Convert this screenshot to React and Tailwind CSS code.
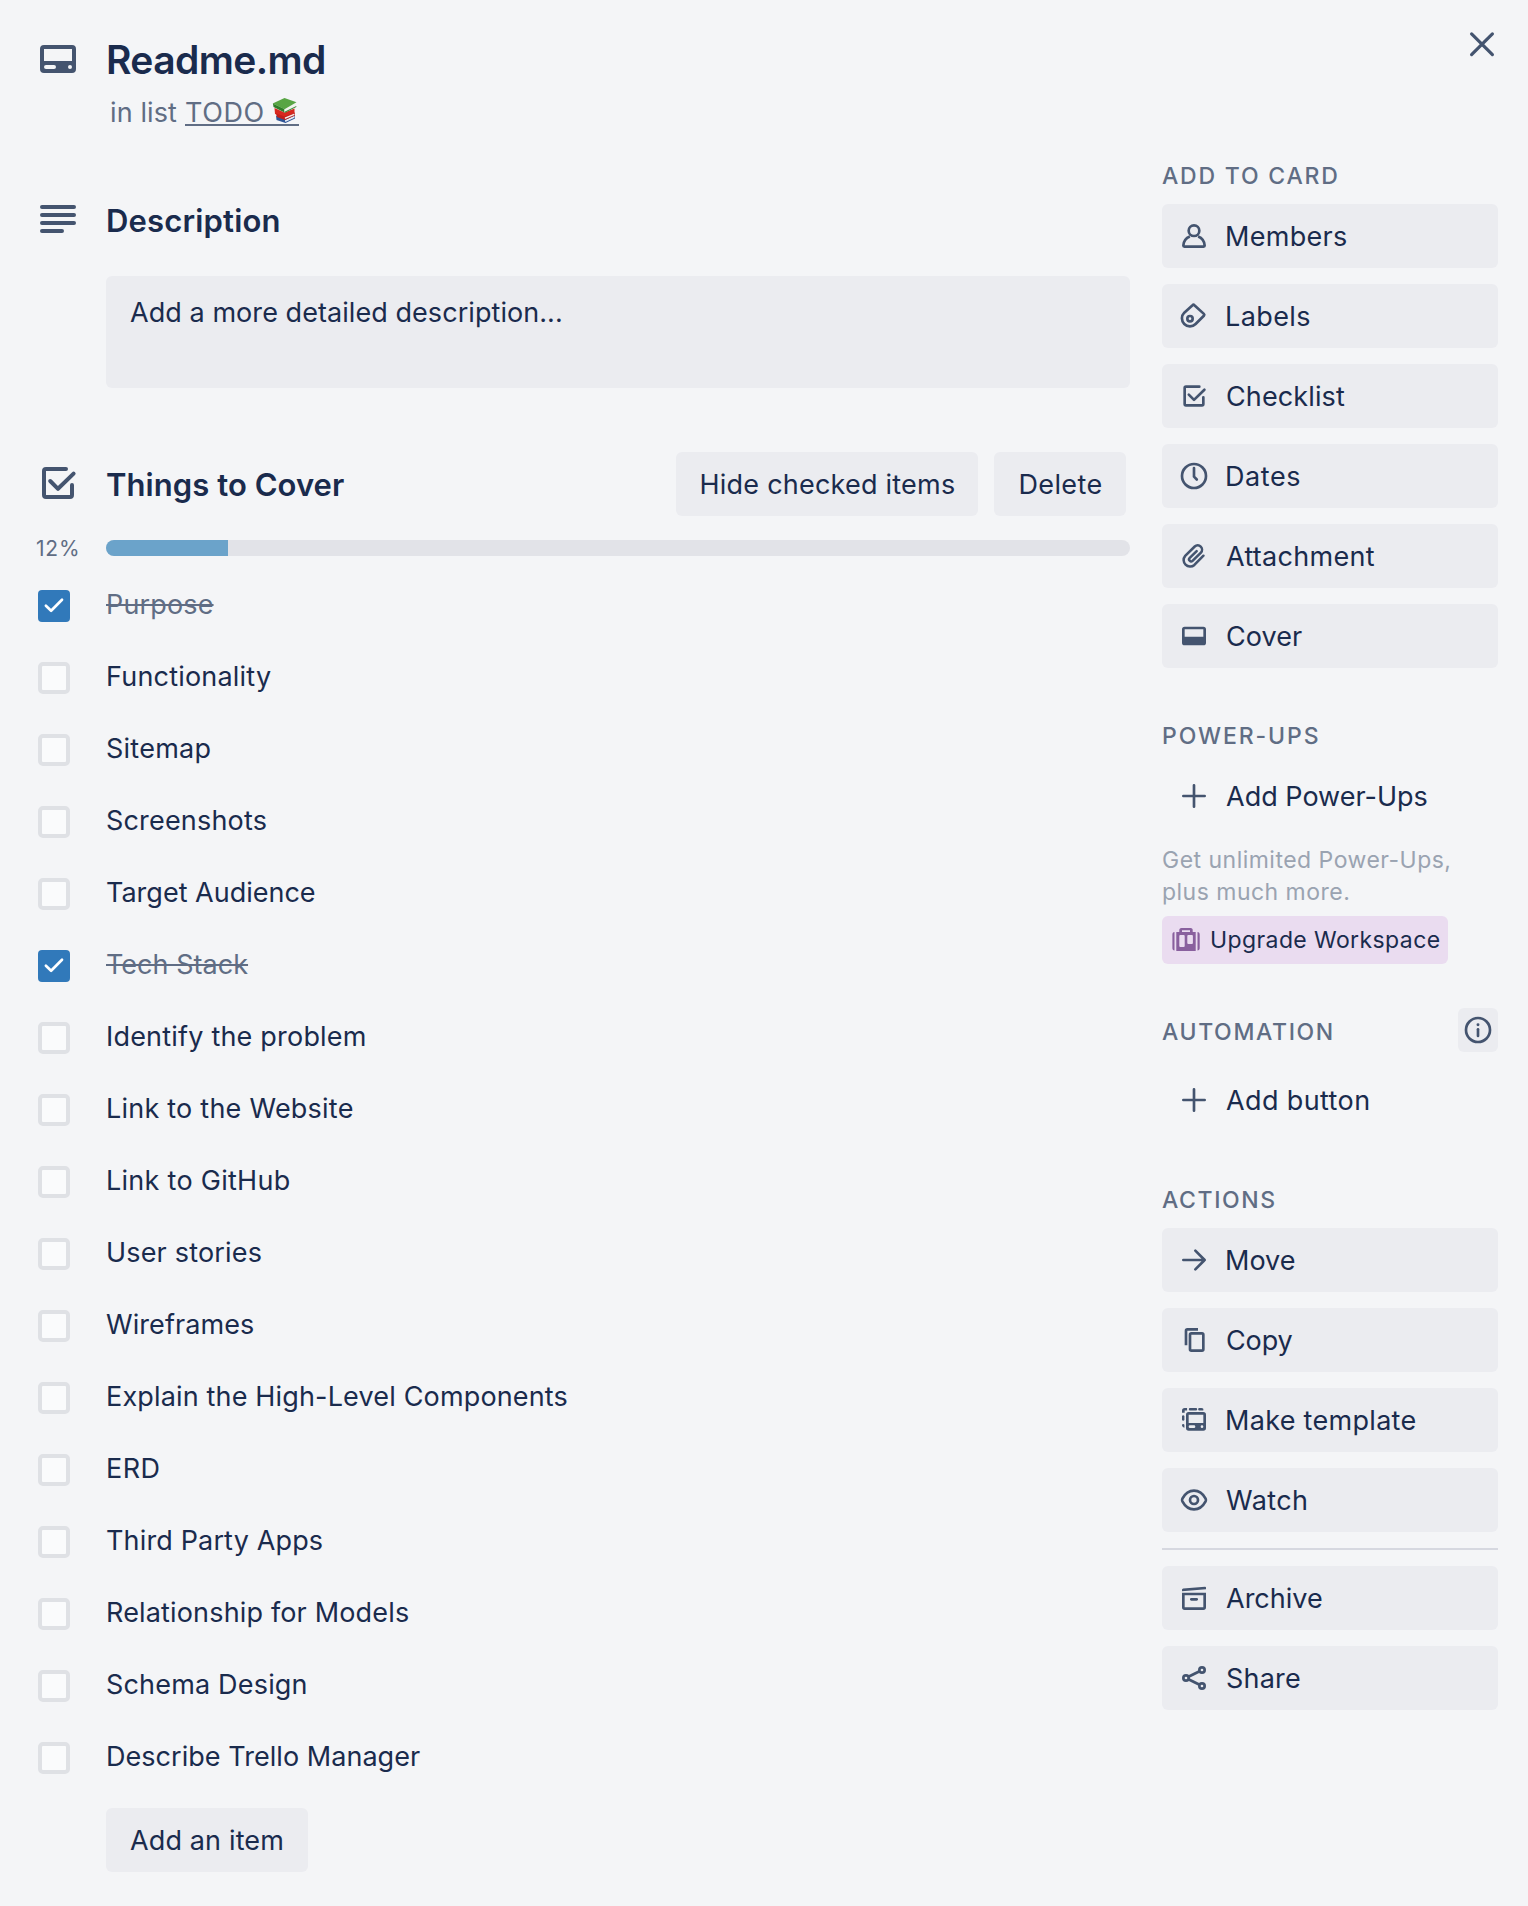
import React from "react";

function Icon({ children, size = "size-8", className = "" }) {
  return (
    <svg viewBox="0 0 24 24" fill="none" stroke="currentColor" strokeWidth="2" className={`${size} shrink-0 text-[#44546f] ${className}`}>
      {children}
    </svg>
  );
}

const icons = {
  members: (
    <>
      <circle cx="12" cy="8" r="4" />
      <path strokeLinejoin="round" d="M8.9 12.4C6 13.5 4.2 16.2 4 19.2c0 .5.3.8.8.8h14.4c.5 0 .8-.3.8-.8-.2-3-2-5.7-4.9-6.8" />
    </>
  ),
  labels: (
    <>
      <path strokeLinejoin="round" d="M12.3 3.9l7.1 6.5a1 1 0 0 1 0 1.4l-6.2 6.2a6 6 0 0 1-8.5-8.5l6.2-5.6a1 1 0 0 1 1.4 0z" />
      <circle cx="9" cy="14" r="2" />
    </>
  ),
  checklist: (
    <path strokeLinecap="round" strokeLinejoin="round" d="M16 5H6a1 1 0 0 0-1 1v12a1 1 0 0 0 1 1h12a1 1 0 0 0 1-1v-5M8.1 11l3.9 3.9 7.8-7.6" />
  ),
  dates: (
    <>
      <circle cx="12" cy="12" r="9" />
      <path strokeLinecap="round" strokeLinejoin="round" d="M12 6v6.5l2.1 2.1" />
    </>
  ),
  attachment: (
    <path
      strokeLinecap="round"
      strokeWidth="1.9"
      d="M19.1 11.8L12.3 18.7A4.87 4.87 0 0 1 5.4 11.86L12.55 4.87A3.26 3.26 0 0 1 17.2 9.43L10.9 15.6A1.5 1.5 0 0 1 8.8 13.4L14 8.4"
    />
  ),
  cover: <path fill="currentColor" stroke="none" fillRule="evenodd" d="M5 5h14a2 2 0 0 1 2 2v10a2 2 0 0 1-2 2H5a2 2 0 0 1-2-2V7a2 2 0 0 1 2-2zm0 2v5.5h14V7z" />,
  plus: <path strokeLinecap="round" d="M12 4v16M4 12h16" />,
  move: <path strokeLinecap="round" strokeLinejoin="round" d="M4 12h16M13 5l7 7-7 7" />,
  copy: (
    <>
      <path d="M6 16V5a1 1 0 0 1 1-1h8" />
      <rect x="9" y="7" width="10" height="13" rx="1" />
    </>
  ),
  template: (
    <>
      <path fill="currentColor" stroke="none" fillRule="evenodd" d="M8 6h11a2 2 0 0 1 2 2v10a2 2 0 0 1-2 2H8a2 2 0 0 1-2-2V8a2 2 0 0 1 2-2zm0 2v6.3h11V8zm1 8a1 1 0 0 0 0 2h3a1 1 0 0 0 0-2zm9 0a1 1 0 0 0 0 2 1 1 0 0 0 0-2z" />
      <path fill="currentColor" stroke="none" d="M5 3h1.8v1.8H5V6.5H3V5a2 2 0 0 1 2-2zM9 3h4.5a.9.9 0 0 1 0 1.8H9a.9.9 0 0 1 0-1.8zM16 3h1.5A1.5 1.5 0 0 1 19 4.8h-3a.9.9 0 0 1 0-1.8zM3 9a1 1 0 0 1 1.8 0v3a1 1 0 0 1-1.8 0zM3 15.5a1 1 0 0 1 1.8 0v2.3A2 2 0 0 1 3 16.2z" />
    </>
  ),
  watch: (
    <>
      <path strokeLinejoin="round" d="M12 5c4 0 7 2.8 8.7 6 .3.6.3 1.4 0 2-1.7 3.2-4.7 6-8.7 6s-7-2.8-8.7-6c-.3-.6-.3-1.4 0-2C5 7.8 8 5 12 5z" />
      <circle cx="12" cy="12" r="3" />
    </>
  ),
  archive: (
    <>
      <path d="M4 9h16v10a1 1 0 0 1-1 1H5a1 1 0 0 1-1-1z" />
      <path strokeLinecap="round" d="M10 13h4" />
      <path fill="currentColor" stroke="none" d="M3.9 4.8L20.3 3.5a.7.7 0 0 1 .7.7V5.5L3 7V5.8a1 1 0 0 1 .9-1z" />
    </>
  ),
  share: (
    <>
      <circle cx="6" cy="12" r="2" />
      <circle cx="18" cy="6" r="2" />
      <circle cx="18" cy="18" r="2" />
      <path d="M7.8 11.1l8.4-4.2M7.8 12.9l8.4 4.2" />
    </>
  ),
  info: (
    <>
      <circle cx="12" cy="12" r="9" />
      <path strokeLinecap="round" d="M12 11.5v5" />
      <circle cx="12" cy="8" r="1.1" fill="currentColor" stroke="none" />
    </>
  ),
};

const items = [
  ["Purpose", "tracking-[0.15px]", true],
  ["Functionality", "tracking-[0.2px]"],
  ["Sitemap", "tracking-[0.25px]"],
  ["Screenshots", "tracking-[0.18px]"],
  ["Target Audience", "tracking-[0px]"],
  ["Tech Stack", "tracking-[0.03px]", true],
  ["Identify the problem", "tracking-[0.2px]"],
  ["Link to the Website", "tracking-[0.23px]"],
  ["Link to GitHub", "tracking-[0.28px]"],
  ["User stories", "tracking-[0.18px]"],
  ["Wireframes", "tracking-[0.08px]"],
  ["Explain the High-Level Components", "tracking-[0.16px]"],
  ["ERD", "tracking-[0.5px]"],
  ["Third Party Apps", "tracking-[0.15px]"],
  ["Relationship for Models", "tracking-[0.16px]"],
  ["Schema Design", "tracking-[0.18px]"],
  ["Describe Trello Manager", "tracking-[0.04px]"],
];

const addToCard = [
  ["members", "Members", "-ml-px tracking-[0.3px]"],
  ["labels", "Labels", "-ml-px tracking-[0.4px]"],
  ["checklist", "Checklist", "tracking-[0.12px]"],
  ["dates", "Dates", "-ml-px tracking-[0.6px]"],
  ["attachment", "Attachment", "tracking-[0.28px]"],
  ["cover", "Cover", "tracking-[0.06px]"],
];

const actions = [
  ["move", "Move", "-ml-px tracking-[0px]"],
  ["copy", "Copy", "tracking-[-0.1px]"],
  ["template", "Make template", "-ml-px tracking-[0.3px]"],
  ["watch", "Watch", "tracking-[0.4px]"],
];

const filing = [
  ["archive", "Archive", "tracking-[0px]"],
  ["share", "Share", "tracking-[0.21px]"],
];

function SideButton({ icon, label, tracking, plain }) {
  return (
    <button className={`flex h-16 w-full items-center gap-4 rounded-md pl-4 ${plain ? "" : "bg-[#ebecf0]"}`}>
      <Icon>{icons[icon]}</Icon>
      <span className={`pt-[2px] whitespace-nowrap ${tracking}`}>{label}</span>
    </button>
  );
}

function ButtonList({ list }) {
  return (
    <div className="flex flex-col gap-4">
      {list.map(([icon, label, tracking]) => (
        <SideButton key={label} icon={icon} label={label} tracking={tracking} />
      ))}
    </div>
  );
}

function SideHeading({ children, className }) {
  return <h3 className={`text-[23px] leading-8 font-medium text-[#606d84] ${className}`}>{children}</h3>;
}

function Books() {
  return (
    <svg viewBox="0 0 25 25" className="ml-[7px] size-[25px] shrink-0">
      <path d="M4 17.5L13 21l10-4v3.5L13.5 25 4.5 22z" fill="#2f5597" />
      <path d="M13 22l9.5-4.2v2L13.3 24z" fill="#e6ebf2" />
      <path d="M2.5 10L12.500 14.500 22.500 10.500V15L12.500 19.500 3 16z" fill="#d8281f" />
      <path d="M4 15.500L12.500 18.500 23 14.500V17.500L13 22 5 19z" fill="#c21e1a" />
      <path d="M12.800 19.500L22.500 15.400v1.600L13 21z" fill="#f3ece8" />
      <path d="M1 5.500L12.500 11v3.500L1.500 9z" fill="#2f7d2a" />
      <path d="M12.500 11L24 5.200v3.300l-11.500 6z" fill="#f1f3ee" />
      <path d="M12.500 13.800L24.300 8v1L12.500 15z" fill="#3b8a33" />
      <path d="M12.500 0L24.500 4.200 12.500 11.200.6 5.400z" fill="#58a544" />
    </svg>
  );
}

function Suitcase() {
  return (
    <svg viewBox="0 0 28 24" fill="#89609e" className="h-6 w-7 shrink-0">
      <path d="M2.500 4v18.500C1 22.500.4 21.500.4 20V6.500C.4 5 1 4 2.500 4zM25.500 4c1.500 0 2.200 1 2.200 2.500V20c0 1.500-.7 2.500-2.200 2.500z" />
      <path fillRule="evenodd" d="M4.300 4h3V2.500A2.300 2.300 0 0 1 9.500 0h9a2.300 2.300 0 0 1 2.200 2.500V4h3v19H4.300zM10 2.300V4h8V2.300zM8.300 7a1 1 0 0 0-1 1v10a1 1 0 0 0 1 1h3.400a1 1 0 0 0 1-1V8a1 1 0 0 0-1-1zm8 0a1 1 0 0 0-1 1v7a1 1 0 0 0 1 1h3.600a1 1 0 0 0 1-1V8a1 1 0 0 0-1-1z" />
    </svg>
  );
}

function Checkbox({ checked }) {
  if (!checked) return <span className="size-8 rounded-[5px] border-4 border-[#dfe1e5] bg-[#fafbfc]" />;
  return (
    <span className="size-8 rounded-[4px] bg-[#3179ba]">
      <svg viewBox="0 0 32 32" className="size-8" fill="none" stroke="white" strokeWidth="2.7" strokeLinecap="round" strokeLinejoin="round">
        <path d="M7.9 15.8l5.2 4.9L24 9.8" />
      </svg>
    </span>
  );
}

export default function App() {
  return (
    <div className="relative h-[1906px] w-[1528px] overflow-hidden bg-[#f4f5f7] font-[Inter,sans-serif] text-[27px] leading-8 text-[#1a2b4d]">
      <button aria-label="Close" className="absolute top-[28px] right-[30px]">
        <Icon>
          <path strokeWidth="2.4" strokeLinecap="round" d="M4.2 4.4l15.6 15.6M19.8 4.4L4.2 20" />
        </Icon>
      </button>

      <header className="flex h-40 pt-9">
        <div className="w-[106px] pl-[34px]">
          <Icon size="size-12" className="-mt-px">
            <path fill="currentColor" stroke="none" fillRule="evenodd" d="M5 5h14a2 2 0 0 1 2 2v10a2 2 0 0 1-2 2H5a2 2 0 0 1-2-2V7a2 2 0 0 1 2-2zm0 2v6h14V7zm1 8a1 1 0 0 0 0 2h4a1 1 0 0 0 0-2zm12 0a1 1 0 0 0 0 2 1 1 0 0 0 0-2z" />
          </Icon>
        </div>
        <div>
          <h1 className="text-[39px] leading-[48px] font-semibold tracking-[-0.6px]">Readme.md</h1>
          <p className="mt-[14px] ml-1 flex h-7 leading-[30px] text-[#606d84]">
            <span className="mr-[8px] tracking-[0.1px]">in list</span>
            <a className="flex h-7 border-b-2 border-[#606d84] pr-[2px]">
              <span className="tracking-[0.6px]">TODO</span>
              <Books />
            </a>
          </p>
        </div>
      </header>

      <div className="flex">
        <main className="w-[1130px]">
          <section className="pt-[35px]">
            <div className="flex h-12">
              <div className="w-[106px] pl-[34px]">
                <Icon size="size-12">
                  <path strokeLinecap="round" d="M4 6h16M4 10h16M4 14h16M4 18h10" />
                </Icon>
              </div>
              <h2 className="pt-[2px] text-[31px] leading-12 font-semibold tracking-[0.17px]">Description</h2>
            </div>
            <div className="mt-[33px] ml-[106px] h-28 rounded-md bg-[#ebecf0] px-6 pt-[21px] tracking-[0.06px]">Add a more detailed description...</div>
          </section>

          <section className="mt-16">
            <div className="flex h-16 items-center">
              <div className="w-[106px] pl-[34px]">
                <Icon size="size-12" className="-mt-[2px]">{icons.checklist}</Icon>
              </div>
              <h2 className="pt-[2px] text-[31px] leading-12 font-semibold tracking-[0.06px]">Things to Cover</h2>
              <div className="mr-1 ml-auto flex gap-4">
                <button className="h-16 w-[302px] rounded-md bg-[#ebecf0] pt-[2px] pl-px tracking-[0.22px]">Hide checked items</button>
                <button className="h-16 w-[132px] rounded-md bg-[#ebecf0] pt-[2px] pl-px tracking-[0.4px]">Delete</button>
              </div>
            </div>
            <div className="mt-6 flex h-4 items-center">
              <span className="w-[106px] pt-[2px] pl-9 text-[21px] tracking-[0.8px] text-[#606d84]">12%</span>
              <div className="h-4 flex-1 overflow-hidden rounded-full bg-[#e2e3e8]">
                <div className="h-4 w-[122px] bg-[#6ba3ca]" />
              </div>
            </div>
            <ul className="mt-3">
              {items.map(([label, tracking, checked]) => (
                <li key={label} className="flex h-18 pl-[38px]">
                  <div className="flex w-[68px] pt-[22px]">
                    <Checkbox checked={checked} />
                  </div>
                  <span className={`leading-[74px] ${tracking} ${checked ? "text-[#606d84] line-through decoration-2" : ""}`}>{label}</span>
                </li>
              ))}
            </ul>
            <button className="mt-4 ml-[106px] h-16 w-[202px] rounded-md bg-[#ebecf0] pt-[2px] tracking-[0.15px]">Add an item</button>
          </section>
        </main>

        <aside className="ml-8 w-[336px]">
          <SideHeading className="mb-3 tracking-[1.8px]">ADD TO CARD</SideHeading>
          <ButtonList list={addToCard} />

          <SideHeading className="mt-13 mb-3 tracking-[1.9px]">POWER-UPS</SideHeading>
          <SideButton icon="plus" label="Add Power-Ups" tracking="tracking-[0px]" plain />
          <p className="mt-4 text-[23px] leading-8 tracking-[0.48px] text-[#9aa3b1]">
            Get unlimited Power-Ups,
            <br />
            plus much more.
          </p>
          <button className="mt-2 flex h-12 w-[286px] items-center rounded-md bg-[#eadcf0] pl-[10px]">
            <Suitcase />
            <span className="ml-[10px] text-[23px] tracking-[0.4px] whitespace-nowrap">Upgrade Workspace</span>
          </button>

          <div className="mt-11 flex h-11 items-center justify-between">
            <SideHeading className="pt-[3px] tracking-[1.64px]">AUTOMATION</SideHeading>
            <button aria-label="Automation info" className="flex h-11 w-10 items-center justify-center rounded-md bg-[#ebecf0]">
              <Icon>{icons.info}</Icon>
            </button>
          </div>
          <div className="mt-4">
            <SideButton icon="plus" label="Add button" tracking="tracking-[0.38px]" plain />
          </div>

          <SideHeading className="mt-13 mb-3 tracking-[1.62px]">ACTIONS</SideHeading>
          <ButtonList list={actions} />
          <hr className="my-4 border-t-2 border-[#d6d8e0]" />
          <ButtonList list={filing} />
        </aside>
      </div>
    </div>
  );
}
